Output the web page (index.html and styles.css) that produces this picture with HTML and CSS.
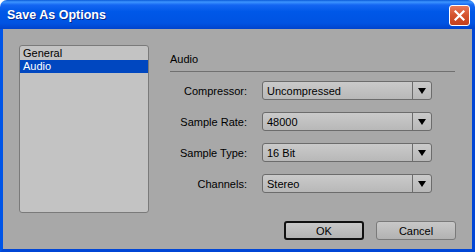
FILE: index.html
```html
<html lang="en">
<head>
    <meta charset="UTF-8">
    <link rel="stylesheet" href="styles.css">
    <title>Save As Options</title>
</head>
<body>

    <div class="window">
        <div class="title-bar">
            <span class="title">Save As Options</span>
            <span class="close-btn">
                <svg width="11" height="11" viewBox="0 0 11 11">
                    <path d="M1.5 1.5 L9.5 9.5 M9.5 1.5 L1.5 9.5" stroke="#fff" stroke-width="2.2" stroke-linecap="square"/>
                </svg>
            </span>
        </div>

        <div class="dialog-body">
            <div class="main">
                <ul class="category-list">
                    <li>General</li>
                    <li class="selected">Audio</li>
                </ul>

                <div class="panel">
                    <div class="panel-header">Audio</div>
                    <div class="form">
                        <label>Compressor:</label>
                        <div class="combo"><span class="combo-value">Uncompressed</span><span class="combo-arrow"></span></div>

                        <label>Sample Rate:</label>
                        <div class="combo"><span class="combo-value">48000</span><span class="combo-arrow"></span></div>

                        <label>Sample Type:</label>
                        <div class="combo"><span class="combo-value">16 Bit</span><span class="combo-arrow"></span></div>

                        <label>Channels:</label>
                        <div class="combo"><span class="combo-value">Stereo</span><span class="combo-arrow"></span></div>
                    </div>
                </div>
            </div>

            <div class="buttons">
                <button type="button" class="btn default">OK</button>
                <button type="button" class="btn">Cancel</button>
            </div>
        </div>
    </div>

</body>
</html>
```

FILE: styles.css
```css
body {
    margin: 0;
    background-color: #ffffff;
    font-family: "Liberation Sans", Arial, sans-serif;
    font-size: 11px;
}

.window {
    width: 475px;
    height: 252px;
    box-sizing: border-box;
    display: flex;
    flex-direction: column;
}

/* barre de titre bleue */
.title-bar {
    height: 29px;
    flex: none;
    border-radius: 7px 7px 0 0;
    background: linear-gradient(to bottom, #0a5ad8 0, #3d95ff 2px, #1466f2 5px, #0058e8 40%, #0053e2 80%, #0043cc 100%);
    display: flex;
    align-items: center;
    justify-content: space-between;
    padding: 0 5px 0 7px;
}

.title {
    color: #ffffff;
    font-weight: bold;
    font-size: 12.5px;
    text-shadow: 1px 1px 0 #0a2a8a;
    margin-top: 1px;
}

.close-btn {
    width: 19px;
    height: 19px;
    border: 1px solid #ffffff;
    border-radius: 3px;
    background: linear-gradient(to bottom, #e8785a, #d4522c 50%, #c4401c);
    display: flex;
    align-items: center;
    justify-content: center;
    margin-top: 1px;
}

.dialog-body {
    flex: 1;
    background-color: #a8a8a8;
    border-left: 3px solid #0055e8;
    border-right: 3px solid #0046d6;
    border-bottom: 3px solid #0046d6;
    padding: 16px 16px 0 16px;
}

.main {
    display: flex;
    height: 168px;
}

.category-list {
    list-style: none;
    margin: 0;
    padding: 1px 0 0 0;
    width: 130px;
    box-sizing: border-box;
    background-color: #c3c3c3;
    border: 1px solid #7a7a7a;
    border-radius: 3px;
}

.category-list li {
    height: 13px;
    line-height: 13px;
    padding-left: 3px;
    color: #000000;
}

.category-list li.selected {
    background-color: #0047c0;
    color: #ffffff;
}

.panel {
    flex: 1;
    margin-left: 21px;
    margin-right: 1px;
}

.panel-header {
    margin-top: 8px;
    line-height: 13px;
    padding-bottom: 5px;
    border-bottom: 1px solid #707070;
    color: #000000;
}

.form {
    display: grid;
    grid-template-columns: 77px 170px;
    column-gap: 15px;
    row-gap: 12px;
    margin-top: 9px;
    align-items: center;
}

.form label {
    text-align: right;
    color: #000000;
}

.combo {
    height: 19px;
    box-sizing: border-box;
    border: 1px solid #6c6c6c;
    border-radius: 3px;
    background: linear-gradient(to bottom, #cacaca, #b8b8b8);
    display: flex;
    align-items: center;
}

.combo-value {
    flex: 1;
    padding-left: 4px;
}

.combo-arrow {
    width: 18px;
    height: 17px;
    border-left: 1px solid #6c6c6c;
    display: flex;
    align-items: center;
    justify-content: center;
}

.combo-arrow::after {
    content: "";
    border-left: 4px solid transparent;
    border-right: 4px solid transparent;
    border-top: 6px solid #000000;
    margin-top: 1px;
}

.buttons {
    display: flex;
    justify-content: flex-end;
    gap: 12px;
    margin-top: 8px;
}

.btn {
    width: 80px;
    height: 19px;
    padding: 0;
    font-family: "Liberation Sans", Arial, sans-serif;
    font-size: 11px;
    color: #000000;
    border: 1px solid #7a7a7a;
    border-radius: 3px;
    background: linear-gradient(to bottom, #c8c8c8, #b2b2b2);
}

.btn.default {
    border: 2px solid #111111;
}
```
